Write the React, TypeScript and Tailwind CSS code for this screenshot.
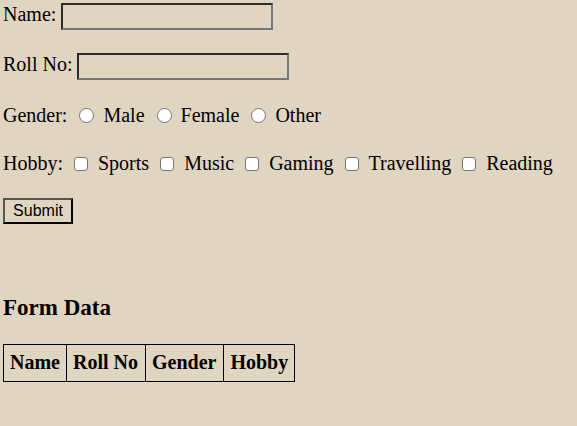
import { useState } from 'react';

const genders = ['Male', 'Female', 'Other'];
const hobbies = ['Sports', 'Music', 'Gaming', 'Travelling', 'Reading'];

const columns = [
  { label: 'Name', pad: 'px-[6px]' },
  { label: 'Roll No', pad: 'pl-[6px] pr-[7px]' },
  { label: 'Gender', pad: 'pl-[6px] pr-[7px]' },
  { label: 'Hobby', pad: 'px-[6px]' },
];

export default function App() {
  const [name, setName] = useState('');
  const [roll, setRoll] = useState('');

  return (
    <div className="min-h-screen w-full bg-[#e0d5c0] pl-[3px] text-[20px] text-black font-['Liberation_Serif','Times_New_Roman',serif]">
      <form className="flex flex-col" onSubmit={(e) => e.preventDefault()}>
        {/* Name */}
        <div className="mt-[3px] flex h-[27px] items-start">
          <label className="leading-[23px]">Name:</label>
          <input
            value={name}
            onChange={(e) => setName(e.target.value)}
            className="ml-[5px] h-[27px] w-[212px] border-2 border-t-[#2b2b2b] border-l-[#2b2b2b] border-r-[#777] border-b-[#777] bg-transparent px-1 text-[16px] outline-none"
          />
        </div>

        {/* Roll No */}
        <div className="mt-[23px] flex h-[27px] items-start">
          <label className="leading-[23px]">Roll No:</label>
          <input
            value={roll}
            onChange={(e) => setRoll(e.target.value)}
            className="ml-[5px] h-[27px] w-[212px] border-2 border-t-[#2b2b2b] border-l-[#2b2b2b] border-r-[#777] border-b-[#777] bg-transparent px-1 text-[16px] outline-none"
          />
        </div>

        {/* Gender */}
        <div className="mt-[24px] flex h-[23px] items-center leading-[23px]">
          <span>Gender:</span>
          {genders.map((g) => (
            <label key={g} className="flex items-center">
              <input
                type="radio"
                name="gender"
                className="ml-[12px] mr-[9px] h-[15px] w-[15px] shrink-0 appearance-none rounded-full border border-[#767676] bg-white"
              />
              <span>{g}</span>
            </label>
          ))}
        </div>

        {/* Hobby */}
        <div className="mt-[25px] flex h-[23px] items-center leading-[23px]">
          <span>Hobby:</span>
          {hobbies.map((h) => (
            <label key={h} className="flex items-center">
              <input
                type="checkbox"
                className="ml-[11px] mr-[10px] h-[14px] w-[14px] shrink-0 appearance-none rounded-[3px] border border-[#767676] bg-white"
              />
              <span>{h}</span>
            </label>
          ))}
        </div>

        <button
          type="submit"
          className="mt-[23px] h-[26px] w-[70px] self-start border-2 border-t-[#555] border-l-[#555] border-r-black border-b-black bg-transparent text-[16px] leading-none font-['Liberation_Sans',Arial,sans-serif]"
        >
          Submit
        </button>
      </form>

      <h3 className="mt-[71px] text-[23px] leading-[26px] font-bold">Form Data</h3>

      <table className="mt-[23px] border-collapse border border-black">
        <thead>
          <tr>
            {columns.map((c) => (
              <th key={c.label} className={`border border-black pt-[6px] pb-[7px] leading-[23px] font-bold ${c.pad}`}>
                {c.label}
              </th>
            ))}
          </tr>
        </thead>
      </table>
    </div>
  );
}
